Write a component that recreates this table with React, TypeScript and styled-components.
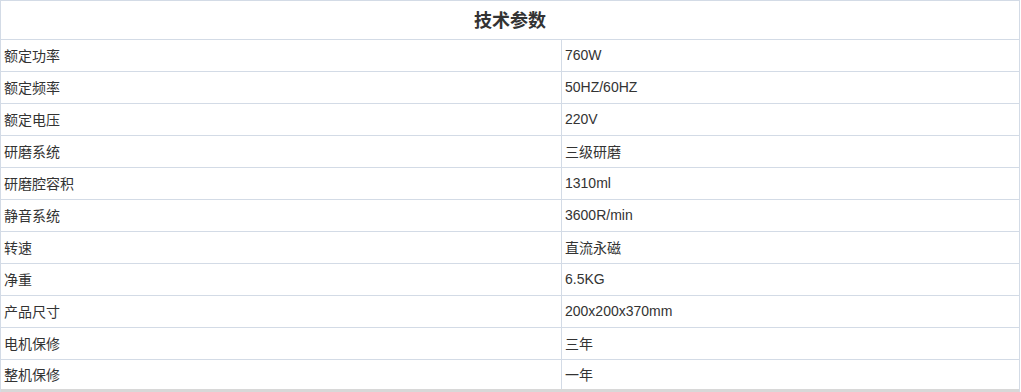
import styled, { createGlobalStyle } from "styled-components";

const GlobalStyle = createGlobalStyle`
  html, body {
    margin: 0;
    padding: 0;
    background: #fff;
  }
  body {
    font-family: "Liberation Sans", "Noto Sans CJK SC", sans-serif;
    color: #333;
  }
`;

const lineColor = "#d3dbe6";

const StyledTable = styled.div`
  width: 1020px;
  border-top: 1px solid ${lineColor};
  border-left: 1px solid ${lineColor};
  border-right: 1px solid ${lineColor};
  box-sizing: border-box;
`;

const StyledTitle = styled.div`
  height: 39px;
  box-sizing: border-box;
  padding-bottom: 3px;
  display: flex;
  align-items: center;
  justify-content: center;
  font-size: 18px;
  font-weight: bold;
  color: #333;
  border-bottom: 1px solid ${lineColor};
`;

const StyledRow = styled.div<{ $last?: boolean }>`
  display: grid;
  grid-template-columns: 561px 1fr;
  height: ${(p) => (p.$last ? "29px" : "31px")};
  border-bottom: ${(p) => (p.$last ? "3px solid #d8d8d8" : `1px solid ${lineColor}`)};
`;

const StyledCell = styled.div<{ $divider?: boolean }>`
  display: flex;
  align-items: center;
  padding: 0 0 2px 3px;
  font-size: 14px;
  color: #333;
  border-right: ${(p) => (p.$divider ? `1px solid ${lineColor}` : "none")};
`;

const specs = [
  { id: 1, name: "额定功率", value: "760W" },
  { id: 2, name: "额定频率", value: "50HZ/60HZ" },
  { id: 3, name: "额定电压", value: "220V" },
  { id: 4, name: "研磨系统", value: "三级研磨" },
  { id: 5, name: "研磨腔容积", value: "1310ml" },
  { id: 6, name: "静音系统", value: "3600R/min" },
  { id: 7, name: "转速", value: "直流永磁" },
  { id: 8, name: "净重", value: "6.5KG" },
  { id: 9, name: "产品尺寸", value: "200x200x370mm" },
  { id: 10, name: "电机保修", value: "三年" },
  { id: 11, name: "整机保修", value: "一年" },
];

function App() {
  return (
    <>
      <GlobalStyle />
      <StyledTable>
        <StyledTitle>技术参数</StyledTitle>
        {specs.map((spec, i) => (
          <StyledRow key={spec.id} $last={i === specs.length - 1}>
            <StyledCell $divider>{spec.name}</StyledCell>
            <StyledCell>{spec.value}</StyledCell>
          </StyledRow>
        ))}
      </StyledTable>
    </>
  );
}

export default App;
